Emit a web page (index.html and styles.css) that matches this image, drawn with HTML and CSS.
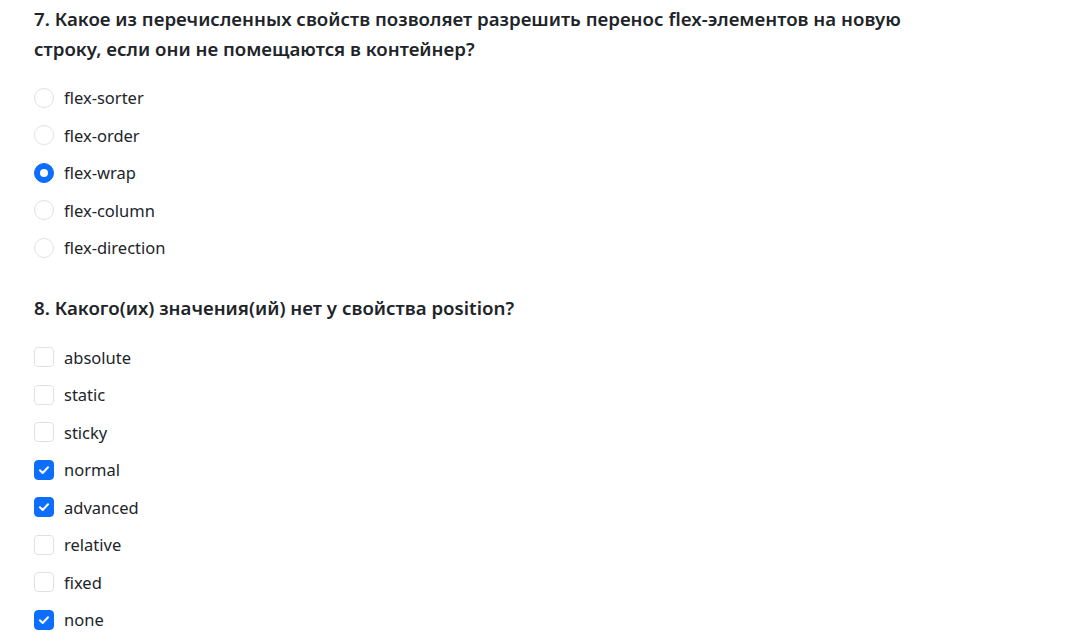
FILE: index.html
```html
<!DOCTYPE html>
<html lang="ru">
<head>
<meta charset="utf-8">
<link rel="stylesheet" href="styles.css">
</head>
<body>
<div class="quiz">
  <section class="question">
    <h2 class="q-title">7. Какое из перечисленных свойств позволяет разрешить перенос flex-элементов на новую строку, если они не помещаются в контейнер?</h2>
    <div class="options">
      <label class="opt"><span class="radio"></span><span>flex-sorter</span></label>
      <label class="opt"><span class="radio"></span><span>flex-order</span></label>
      <label class="opt"><span class="radio on"></span><span>flex-wrap</span></label>
      <label class="opt"><span class="radio"></span><span>flex-column</span></label>
      <label class="opt"><span class="radio"></span><span>flex-direction</span></label>
    </div>
  </section>
  <section class="question">
    <h2 class="q-title">8. Какого(их) значения(ий) нет у свойства position?</h2>
    <div class="options">
      <label class="opt"><span class="check"></span><span>absolute</span></label>
      <label class="opt"><span class="check"></span><span>static</span></label>
      <label class="opt"><span class="check"></span><span>sticky</span></label>
      <label class="opt"><span class="check on"><svg viewBox="0 0 20 20"><path d="M5.5 10.3l3 3 6-6.3" fill="none" stroke="#fff" stroke-width="2.2" stroke-linecap="round" stroke-linejoin="round"/></svg></span><span>normal</span></label>
      <label class="opt"><span class="check on"><svg viewBox="0 0 20 20"><path d="M5.5 10.3l3 3 6-6.3" fill="none" stroke="#fff" stroke-width="2.2" stroke-linecap="round" stroke-linejoin="round"/></svg></span><span>advanced</span></label>
      <label class="opt"><span class="check"></span><span>relative</span></label>
      <label class="opt"><span class="check"></span><span>fixed</span></label>
      <label class="opt"><span class="check on"><svg viewBox="0 0 20 20"><path d="M5.5 10.3l3 3 6-6.3" fill="none" stroke="#fff" stroke-width="2.2" stroke-linecap="round" stroke-linejoin="round"/></svg></span><span>none</span></label>
    </div>
  </section>
</div>
</body>
</html>
```
FILE: styles.css
```css
* { box-sizing: border-box; }
html, body { margin: 0; background: #fff; }
body {
  font-family: "Noto Sans", "Open Sans", "Liberation Sans", sans-serif;
  color: #212529;
}
.quiz {
  width: 940px;
  padding: 4px 0 0 34px;
  display: flex;
  flex-direction: column;
  gap: 26px;
}
.question {
  display: flex;
  flex-direction: column;
  gap: 15px;
}
.question + .question .options { margin-top: 1px; }
.q-title {
  margin: 0;
  font-size: 18.7px;
  font-weight: 600;
  line-height: 30px;
}
.options {
  display: flex;
  flex-direction: column;
}
.opt {
  display: flex;
  align-items: center;
  gap: 10px;
  height: 37.5px;
  font-size: 16.5px;
}
.radio, .check {
  width: 20px;
  height: 20px;
  flex: none;
  border: 1px solid #dee2e6;
  background: #fff;
  display: flex;
  align-items: center;
  justify-content: center;
}
.radio { border-radius: 50%; }
.check { border-radius: 4px; }
.radio.on, .check.on {
  background: #0d6efd;
  border-color: #0d6efd;
}
.radio.on::after {
  content: "";
  width: 8px;
  height: 8px;
  border-radius: 50%;
  background: #fff;
}
.check svg { width: 20px; height: 20px; display: block; }
```
